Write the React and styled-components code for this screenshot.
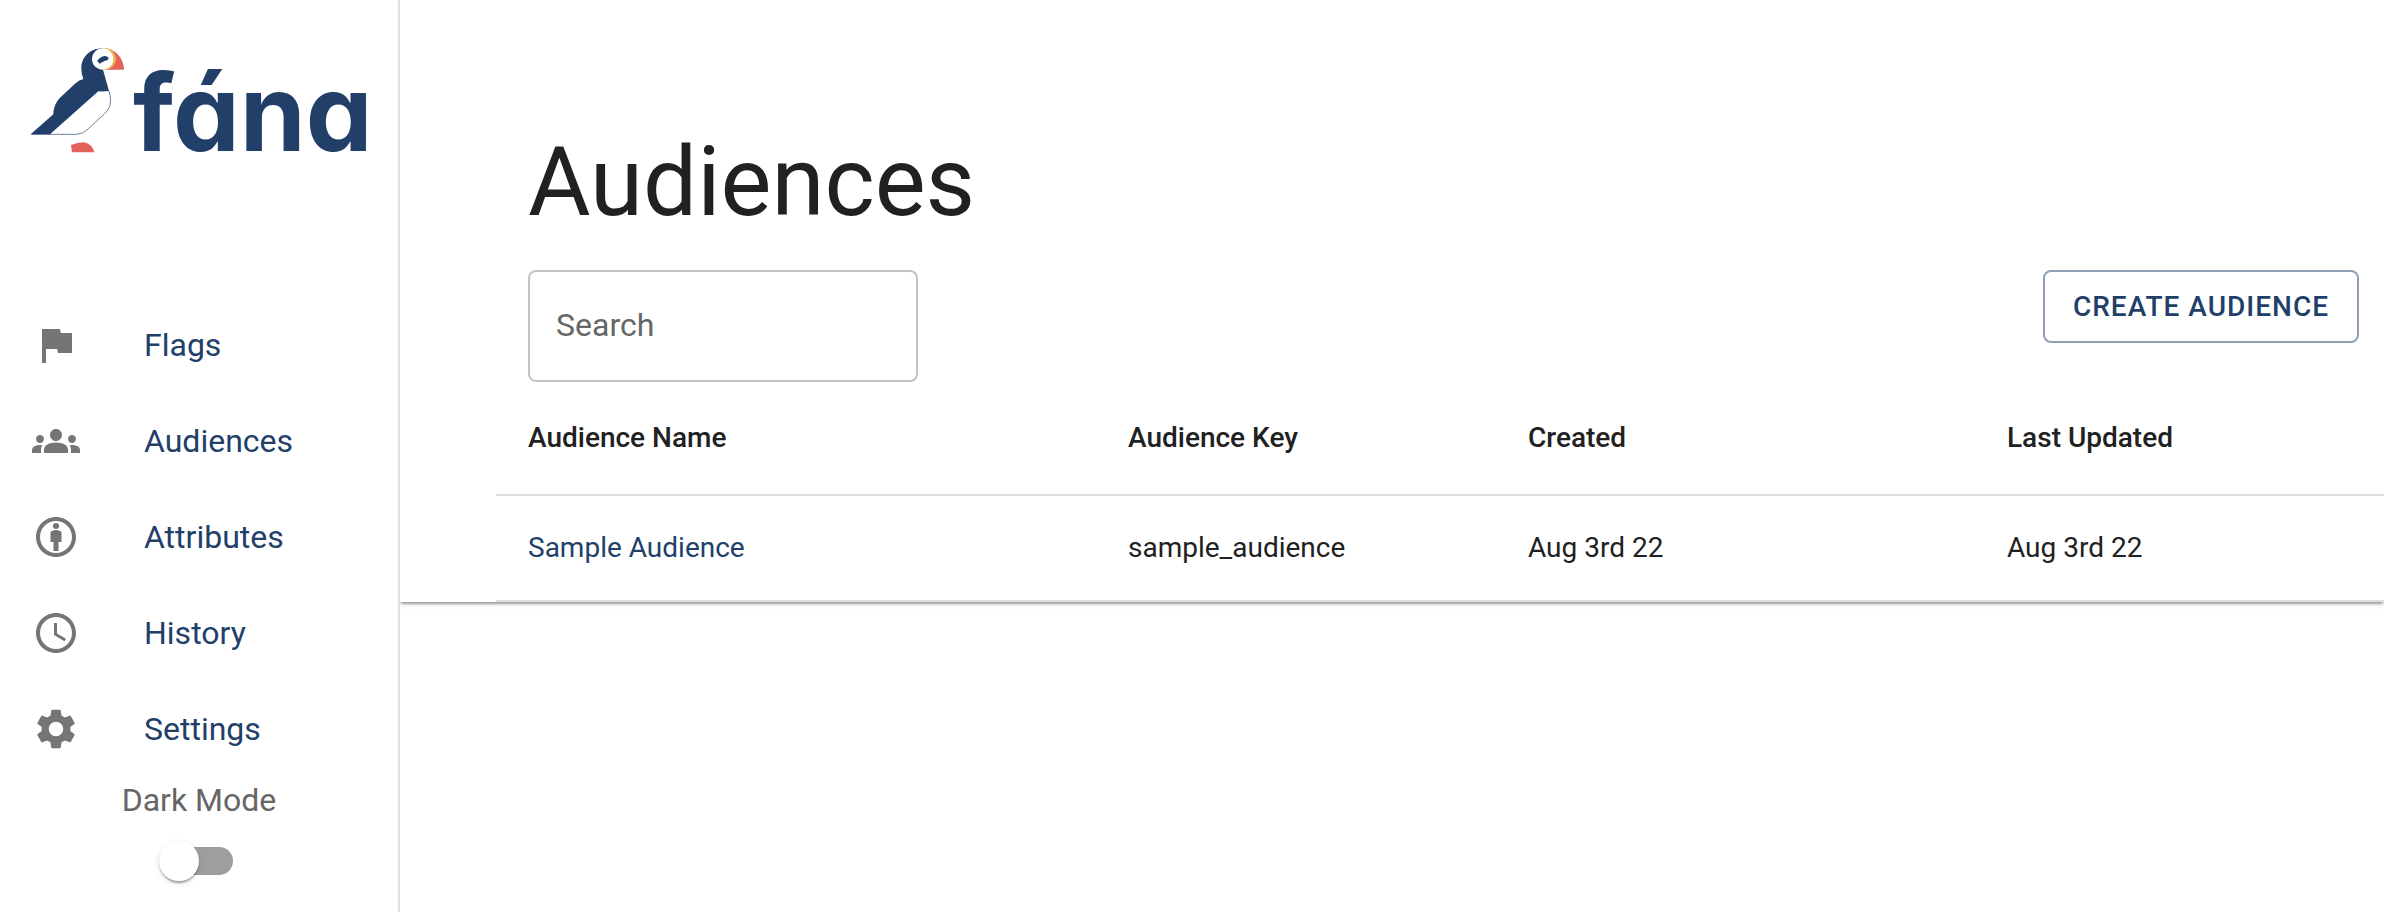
import React, { useState } from "react";
import styled, { createGlobalStyle, ThemeProvider } from "styled-components";
import { MdFlag, MdGroups, MdAttribution, MdAccessTime, MdSettings } from "react-icons/md";

const theme = {
  navy: "#223f6a",
  text: "#212121",
  muted: "#666666",
  icon: "#757575",
  line: "#e0e0e0",
};

const GlobalStyle = createGlobalStyle`
  *, *::before, *::after { box-sizing: border-box; }
  body {
    margin: 0;
    background: #fff;
    color: ${theme.text};
    font-family: Roboto, "Liberation Sans", sans-serif;
    font-size: 32px;
    line-height: 48px;
  }
`;

const Page = styled.div`
  display: flex;
  align-items: stretch;
  min-height: 100vh;
`;

const Sidebar = styled.aside`
  flex: none;
  width: 400px;
  padding-top: 47px;
  border-right: 2px solid ${(p) => p.theme.line};
  background: #fff;
  z-index: 1;
`;

const LogoLink = styled.a`
  display: flex;
  align-items: flex-end;
  gap: 8px;
  margin: 0 28px 144px 30px;
  color: ${(p) => p.theme.navy};
  text-decoration: none;
`;

const Puffin = styled.svg`
  flex: none;
  display: block;
  width: 95px;
  height: 106px;
`;

const Wordmark = styled.span`
  font-family: Inter, Lato, sans-serif;
  font-size: 106px;
  font-weight: 700;
  line-height: 80px;
  font-feature-settings: "cv11";
`;

const NavList = styled.ul`
  list-style: none;
  margin: 0;
  padding: 0;
`;

const NavLink = styled.a`
  display: flex;
  align-items: center;
  gap: 64px;
  height: 96px;
  padding: 0 32px;
  color: ${(p) => p.theme.navy};
  text-decoration: none;

  svg {
    flex: none;
    width: 48px;
    height: 48px;
    color: ${(p) => p.theme.icon};
  }
`;

const ModeLabel = styled.label`
  display: flex;
  flex-direction: column;
  align-items: center;
  gap: 24px;
  padding-bottom: 36px;
  color: ${(p) => p.theme.muted};
  line-height: 46px;
  cursor: pointer;
`;

const Switch = styled.input`
  appearance: none;
  position: relative;
  width: 68px;
  height: 28px;
  margin: 0;
  border-radius: 14px;
  background: ${(p) => (p.checked ? "#91a0b5" : "#9e9e9e")};
  cursor: pointer;

  &::before {
    content: "";
    position: absolute;
    top: -6px;
    left: ${(p) => (p.checked ? "34px" : "-6px")};
    width: 40px;
    height: 40px;
    border-radius: 50%;
    background: #fff;
    box-shadow: 0 4px 2px -2px rgba(0, 0, 0, 0.2), 0 2px 2px rgba(0, 0, 0, 0.14),
      0 2px 6px rgba(0, 0, 0, 0.12);
  }
`;

const Main = styled.main`
  flex: 1;
  min-width: 0;
`;

const Paper = styled.section`
  padding: 126px 0 0 96px;
  box-shadow: 0 4px 2px -2px rgba(0, 0, 0, 0.2), 0 2px 2px rgba(0, 0, 0, 0.14),
    0 2px 6px rgba(0, 0, 0, 0.12);
`;

const Title = styled.h1`
  margin: 0 0 32px;
  padding-left: 32px;
  font-size: 96px;
  font-weight: 400;
  line-height: 112px;
`;

const Toolbar = styled.div`
  display: flex;
  align-items: flex-start;
  justify-content: space-between;
  padding: 0 25px 0 32px;
`;

const SearchField = styled.input`
  width: 390px;
  height: 112px;
  padding: 0 26px 2px;
  border: 2px solid #c4c4c4;
  border-radius: 8px;
  background: #fff;
  color: ${(p) => p.theme.text};
  font: inherit;
  font-size: 32px;

  &::placeholder {
    color: ${(p) => p.theme.muted};
    opacity: 1;
  }
`;

const CreateButton = styled.button`
  padding: 10px 28px;
  border: 2px solid #91a0b7;
  border-radius: 8px;
  background: #fff;
  color: ${(p) => p.theme.navy};
  font: inherit;
  font-size: 28px;
  font-weight: 500;
  line-height: 49px;
  letter-spacing: 1px;
  text-transform: uppercase;
  cursor: pointer;
`;

const Table = styled.table`
  width: 100%;
  table-layout: fixed;
  border-collapse: separate;
  border-spacing: 0;
  font-size: 28px;
`;

const HeadCell = styled.th`
  width: ${(p) => p.$width || "auto"};
  padding: 32px;
  border-bottom: 2px solid ${(p) => p.theme.line};
  font-weight: 500;
  line-height: 48px;
  text-align: left;
`;

const Cell = styled.td`
  padding: 32px;
  border-bottom: 2px solid ${(p) => p.theme.line};
  line-height: 40px;
`;

const CellLink = styled.a`
  color: ${(p) => p.theme.navy};
  text-decoration: none;
`;

const navItems = [
  { label: "Flags", Icon: MdFlag },
  { label: "Audiences", Icon: MdGroups },
  { label: "Attributes", Icon: MdAttribution },
  { label: "History", Icon: MdAccessTime },
  { label: "Settings", Icon: MdSettings },
];

const columns = [
  { label: "Audience Name", width: "600px" },
  { label: "Audience Key", width: "400px" },
  { label: "Created", width: "479px" },
  { label: "Last Updated" },
];

const audiences = [
  { name: "Sample Audience", key: "sample_audience", created: "Aug 3rd 22", updated: "Aug 3rd 22" },
];

function PuffinMark() {
  return (
    <Puffin viewBox="30 50 285 318" aria-hidden="true">
      <path
        d="M267 182Q275 210 269 228Q264 242 252 252L205 295Q190 311 170 312H34"
        fill="none"
        stroke="#223f6a"
        strokeWidth="2"
      />
      <path
        d="M32 312L100 252Q100 222 120 202L165 160Q176 150 190 146Q184 134 184 114C184 80 210 54 249 54V118L267 182Q250 184 235 183L90 312Z"
        fill="#223f6a"
      />
      <path d="M249 54C284 54 310 80 312 118H249Z" fill="#e4605b" />
      <path d="M249 54H256A32 32 0 0 1 256 118H249Z" fill="#f3b04f" />
      <circle cx="248" cy="86" r="32" fill="#fff" />
      <path d="M231 92Q241 79 254 77Q264 77 266 85Q262 90 254 92L238 100Q237 95 231 92Z" fill="#223f6a" />
      <path d="M153 344Q172 336 192 336Q216 341 223 366H156Z" fill="#e4605b" />
    </Puffin>
  );
}

export default function App() {
  const [dark, setDark] = useState(false);
  const [query, setQuery] = useState("");
  const rows = audiences.filter((a) => a.name.toLowerCase().includes(query.toLowerCase()));

  return (
    <ThemeProvider theme={theme}>
      <GlobalStyle />
      <Page>
        <Sidebar>
          <LogoLink href="#">
            <PuffinMark />
            <Wordmark>fána</Wordmark>
          </LogoLink>
          <nav>
            <NavList>
              {navItems.map(({ label, Icon }) => (
                <li key={label}>
                  <NavLink href={`#${label.toLowerCase()}`}>
                    <Icon aria-hidden="true" />
                    {label}
                  </NavLink>
                </li>
              ))}
            </NavList>
          </nav>
          <ModeLabel>
            Dark Mode
            <Switch type="checkbox" checked={dark} onChange={(e) => setDark(e.target.checked)} />
          </ModeLabel>
        </Sidebar>
        <Main>
          <Paper>
            <Title>Audiences</Title>
            <Toolbar>
              <SearchField
                type="text"
                aria-label="Search"
                placeholder="Search"
                value={query}
                onChange={(e) => setQuery(e.target.value)}
              />
              <CreateButton type="button">Create audience</CreateButton>
            </Toolbar>
            <Table>
              <thead>
                <tr>
                  {columns.map((c) => (
                    <HeadCell key={c.label} scope="col" $width={c.width}>
                      {c.label}
                    </HeadCell>
                  ))}
                </tr>
              </thead>
              <tbody>
                {rows.map((a) => (
                  <tr key={a.key}>
                    <Cell>
                      <CellLink href={`#${a.key}`}>{a.name}</CellLink>
                    </Cell>
                    <Cell>{a.key}</Cell>
                    <Cell>{a.created}</Cell>
                    <Cell>{a.updated}</Cell>
                  </tr>
                ))}
              </tbody>
            </Table>
          </Paper>
        </Main>
      </Page>
    </ThemeProvider>
  );
}
